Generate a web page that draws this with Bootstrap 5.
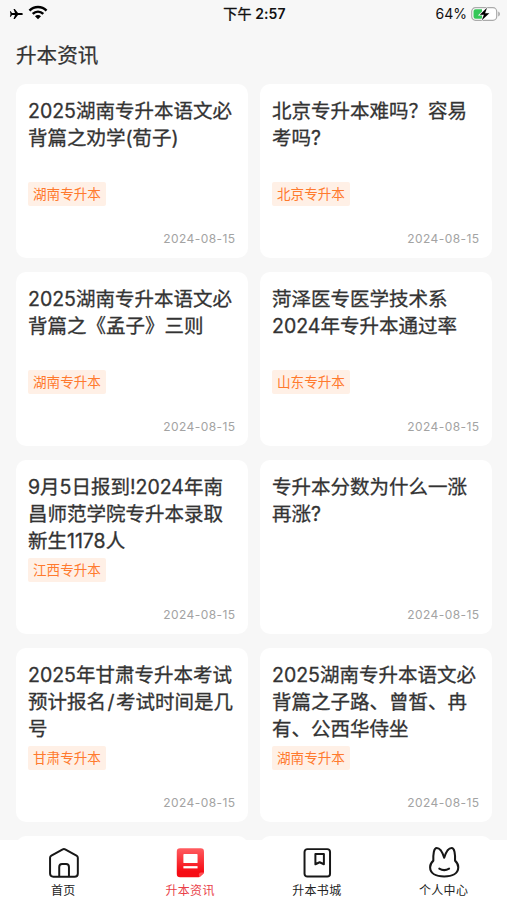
<!DOCTYPE html>
<html lang="zh-CN">
<head>
<meta charset="utf-8">
<meta name="viewport" content="width=device-width, initial-scale=1">
<title>升本资讯</title>
<link href="https://cdn.jsdelivr.net/npm/bootstrap@5.3.0/dist/css/bootstrap.min.css" rel="stylesheet">
<style>
body{font-family:Inter,"Noto Sans CJK SC",sans-serif;background:#f7f7f7;color:#333;height:900px;overflow:hidden}
.status{height:28px;padding:0 7px 0 9px;color:#111;font-size:14px;line-height:28px}
.status>div{flex:1 1 0}
.clock{font-weight:600;font-size:14px;letter-spacing:.1px}
.clock span{font-weight:400;-webkit-text-stroke:.4px #111}
.page-title{font-size:20.6px;line-height:28px;padding:14px 16px 0;height:56px;-webkit-text-stroke:.25px #333}
.news{display:grid;grid-template-columns:1fr 1fr;gap:14.5px 12.5px;padding:0 15.5px 0 16px}
.news-item{height:173.5px;background:#fff;border-radius:10px;padding:13.5px 12px 9px}
.news-title{font-size:19.5px;line-height:27.4px;height:84px;white-space:nowrap;-webkit-text-stroke:.3px #333}
.news-title .slash{display:inline-block;width:10px;text-align:center}
.tag{background:#fff0e6;color:#ff7a2e;font-size:13.6px;line-height:24px;height:24.5px;padding:0 5px;border-radius:2px}
.date{font-size:12px;line-height:20px;color:#a3a3a3;letter-spacing:.42px}
.tabs{height:60px;background:#fff;font-size:12px;color:#222}
.tab{flex:1 1 0;padding-top:5.5px;text-decoration:none;color:inherit}
.tab svg{width:36px;height:36px;display:block}
.tab span{line-height:18px;margin-top:2.5px;letter-spacing:.35px}
.tab.current{color:#e93f49}
</style>
</head>
<body class="d-flex flex-column">
<header class="status d-flex align-items-center flex-shrink-0">
  <div class="d-flex align-items-center">
    <svg width="15" height="14" viewBox="0 0 15 14"><path fill="#000" d="M14 7c0 .7-1 1.100-2.200 1.100H9L5.800 12H4.500L6 8.100H3L1.800 9.700H.9L1.500 7 .9 4.300h.9L3 5.900h3L4.500 2h1.300L9 5.900h2.800C13 5.900 14 6.300 14 7z"/></svg>
    <svg class="ms-1 mb-1" width="20" height="15" viewBox="0 0 20 15"><g fill="none" stroke="#000" stroke-width="2.500"><path d="M1.500 5.700C6.200.9 13.800.9 18.500 5.700"/><path d="M4.700 8.900C7.800 5.900 12.200 5.900 15.300 8.900"/></g><path d="M10 14.200 7 11.300c1.600-1.600 4.400-1.600 6 0z"/></svg>
  </div>
  <div class="clock text-center"><span>下午</span> 2:57</div>
  <div class="d-flex align-items-center justify-content-end">64%
    <svg class="ms-1" width="29" height="16" viewBox="0 0 29 16"><rect x=".7" y="1.700" width="25" height="12.600" rx="3.800" fill="#fff" stroke="#aaa" stroke-width="1.200"/><path d="M27.200 5.500c2.300.8 2.300 4.200 0 5z" fill="#aaa"/><path d="M4.500 3.300H11v9.400H4.500a2 2 0 0 1-2-2V5.300a2 2 0 0 1 2-2z" fill="#35c759"/><path d="M16 1.800 8.800 8.700h4.100L10.800 14.200l7.500-7h-4.200z" fill="#000" stroke="#f7f7f7" stroke-width="1.600" paint-order="stroke"/></svg>
  </div>
</header>
<h1 class="page-title m-0 fw-normal flex-shrink-0">升本资讯</h1>
<main class="news flex-grow-1 overflow-hidden align-content-start">
  <article class="news-item d-flex flex-column align-items-start"><div class="news-title">2025湖南专升本语文必<br>背篇之劝学(荀子)</div><span class="tag">湖南专升本</span><time class="date mt-auto align-self-end">2024-08-15</time></article>
  <article class="news-item d-flex flex-column align-items-start"><div class="news-title">北京专升本难吗？容易<br>考吗?</div><span class="tag">北京专升本</span><time class="date mt-auto align-self-end">2024-08-15</time></article>
  <article class="news-item d-flex flex-column align-items-start"><div class="news-title">2025湖南专升本语文必<br>背篇之《孟子》三则</div><span class="tag">湖南专升本</span><time class="date mt-auto align-self-end">2024-08-15</time></article>
  <article class="news-item d-flex flex-column align-items-start"><div class="news-title">菏泽医专医学技术系<br>2024年专升本通过率</div><span class="tag">山东专升本</span><time class="date mt-auto align-self-end">2024-08-15</time></article>
  <article class="news-item d-flex flex-column align-items-start"><div class="news-title">9月5日报到!2024年南<br>昌师范学院专升本录取<br>新生1178人</div><span class="tag">江西专升本</span><time class="date mt-auto align-self-end">2024-08-15</time></article>
  <article class="news-item d-flex flex-column align-items-start"><div class="news-title">专升本分数为什么一涨<br>再涨?</div><time class="date mt-auto align-self-end">2024-08-15</time></article>
  <article class="news-item d-flex flex-column align-items-start"><div class="news-title">2025年甘肃专升本考试<br>预计报名<span class="slash">/</span>考试时间是几<br>号</div><span class="tag">甘肃专升本</span><time class="date mt-auto align-self-end">2024-08-15</time></article>
  <article class="news-item d-flex flex-column align-items-start"><div class="news-title">2025湖南专升本语文必<br>背篇之子路、曾皙、冉<br>有、公西华侍坐</div><span class="tag">湖南专升本</span><time class="date mt-auto align-self-end">2024-08-15</time></article>
  <article class="news-item"></article>
  <article class="news-item"></article>
</main>
<nav class="tabs d-flex flex-shrink-0">
  <a class="tab d-flex flex-column align-items-center" href="#"><svg viewBox="0 0 36 36" fill="none" stroke="#171717" stroke-width="2.100" stroke-linejoin="round"><path d="M4.300 12.500Q4.300 11 5.700 10.200L17.700 3.500Q19 2.900 20.300 3.500L32.300 10.200Q33.700 11 33.700 12.500V29Q33.700 32.500 30.200 32.500H7.800Q4.300 32.500 4.300 29Z"/><path d="M14 32V22.200Q14 19.100 17 19.100H21.300Q24.300 19.100 24.300 22.200V32"/></svg><span>首页</span></a>
  <a class="tab current d-flex flex-column align-items-center" href="#"><svg viewBox="0 0 36 36"><defs><linearGradient id="redFill" x1="0" y1="0" x2="0" y2="1"><stop offset="0" stop-color="#ff5c60"/><stop offset=".8" stop-color="#f60b14"/></linearGradient></defs><path d="M7.500 2.500H29.300Q32.800 2.500 32.800 6V27.500Q32.800 28.500 32 29.300L28.800 32.400Q28 33.200 27 33.200H7.500Q4 33.200 4 29.700V6Q4 2.500 7.500 2.500Z" fill="url(#redFill)"/><path d="M27.500 33V30Q27.500 28 29.500 28H32.700L32 29.300 28.800 32.400Z" fill="#ff5054"/><rect x="11" y="8.500" width="15" height="9.600" rx=".7" fill="#fff"/><rect x="11" y="21.300" width="15" height="2.400" fill="#fff"/></svg><span>升本资讯</span></a>
  <a class="tab d-flex flex-column align-items-center" href="#"><svg viewBox="0 0 36 36" fill="none" stroke="#171717" stroke-width="2.100" stroke-linejoin="round"><rect x="4.800" y="3.300" width="27" height="29" rx="3"/><path d="M16.300 8.500H25.300V19.300L20.800 17.200 16.300 19.300Z"/></svg><span>升本书城</span></a>
  <a class="tab d-flex flex-column align-items-center" href="#"><svg viewBox="0 0 36 36" fill="none" stroke="#171717" stroke-width="2.200" stroke-linecap="round" stroke-linejoin="round"><path d="M18.200 12.500C16.500 7 13.500 2.200 10.300 2.200C7.200 2.200 6.500 8.500 6.700 15.500C4.500 17.500 3.300 20 3.300 22.500C3.300 29 9.500 32.300 18.200 32.300S33.100 29 33.100 22.500C33.100 20 31.900 17.500 29.700 15.500C29.900 8.500 29.200 2.200 26.100 2.200C22.900 2.200 19.900 7 18.200 12.500Z"/><path d="M13 24Q18.200 27 23.400 24"/></svg><span>个人中心</span></a>
</nav>
<script src="https://cdn.jsdelivr.net/npm/bootstrap@5.3.0/dist/js/bootstrap.bundle.min.js"></script>
</body>
</html>
